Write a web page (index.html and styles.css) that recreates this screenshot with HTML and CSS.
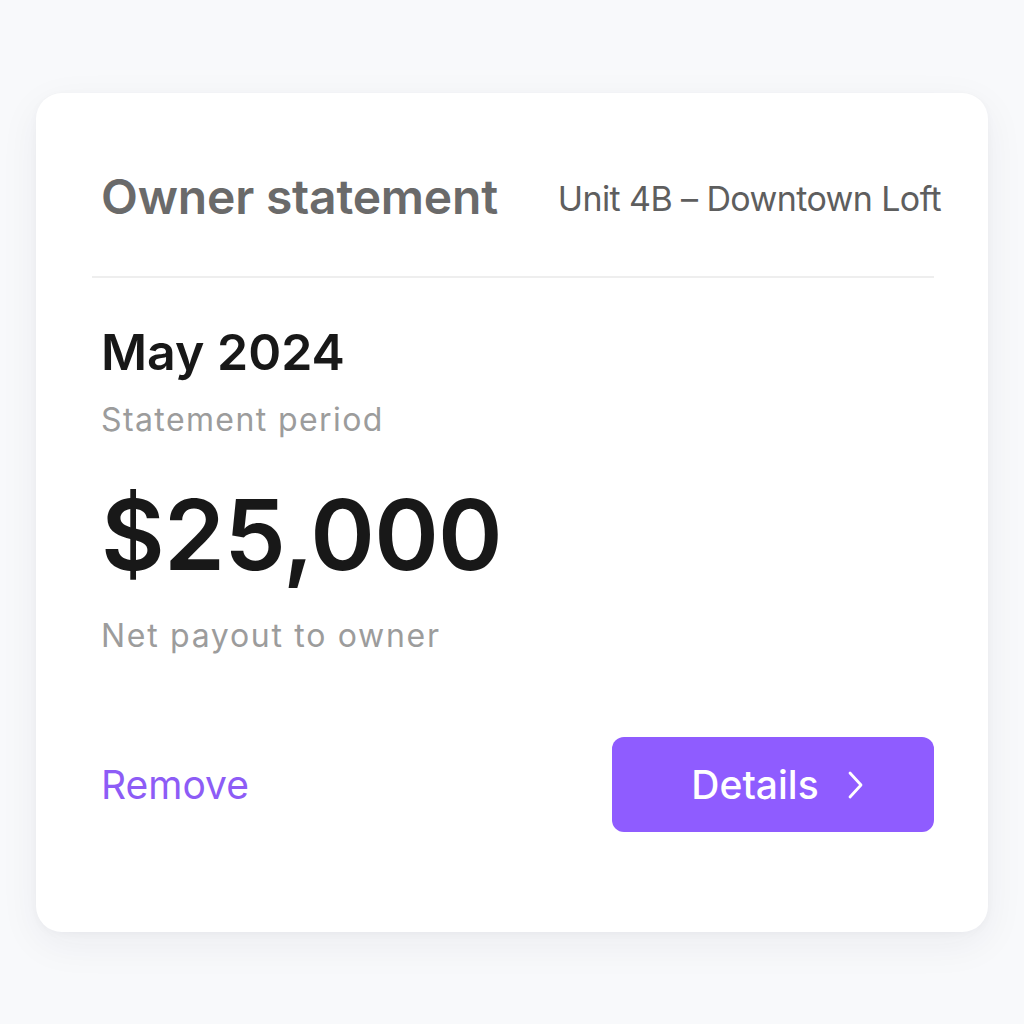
FILE: index.html
```html
<!DOCTYPE html>
<html>
<head>
<meta charset="utf-8">
<link rel="stylesheet" href="styles.css">
</head>
<body>
<div class="card">
  <div class="header">
    <h1 class="title">Owner statement</h1>
    <div class="unit">Unit 4B – Downtown Loft</div>
  </div>
  <div class="divider"></div>
  <div class="body">
    <div class="period">May 2024</div>
    <div class="label">Statement period</div>
    <div class="amount">$25,000</div>
    <div class="label label-net">Net payout to owner</div>
  </div>
  <div class="actions">
    <a class="remove">Remove</a>
    <button class="details">Details
      <svg class="chev" width="20" height="30" viewBox="0 0 20 30"><path d="M5 3 L16 15 L5 27" fill="none" stroke="#fff" stroke-width="2.8" stroke-linecap="round" stroke-linejoin="round"/></svg>
    </button>
  </div>
</div>
</body>
</html>
```
FILE: styles.css
```css
html, body { margin: 0; padding: 0; }
body {
  width: 1024px;
  height: 1024px;
  background: #f8f9fb;
  font-family: Inter, "Noto Sans", sans-serif;
  padding-top: 93px;
  padding-left: 36px;
  box-sizing: border-box;
}
.card {
  width: 952px;
  height: 839px;
  background: #fff;
  border-radius: 26px;
  box-shadow: 0 12px 40px rgba(30, 40, 70, 0.06), 0 2px 8px rgba(30,40,70,0.03);
  box-sizing: border-box;
  padding: 0 54px 0 56px;
  display: flex;
  flex-direction: column;
}
.header {
  display: flex;
  justify-content: space-between;
  align-items: baseline;
  padding: 76px 0 0 9px;
  margin-right: -7px;
}
.title {
  margin: 0;
  font-size: 48px;
  font-weight: 600;
  color: #6a6a6a;
  letter-spacing: -0.2px;
  line-height: 56px;
}
.unit {
  font-size: 34px;
  color: #5e5e5e;
  font-weight: 400;
  letter-spacing: -0.6px;
  line-height: 56px;
  position: relative;
  top: -3px;
}
.divider {
  height: 2px;
  background: #eeeeee;
  margin-top: 46px;
}
.body {
  padding-left: 9px;
  padding-top: 44px;
}
.period {
  font-size: 50px;
  font-weight: 600;
  color: #181818;
  line-height: 60px;
}
.label {
  font-size: 32px;
  color: #9c9c9c;
  line-height: 40px;
  margin-top: 18px;
  letter-spacing: 1.4px;
}
.amount {
  font-size: 98px;
  font-weight: 600;
  color: #181818;
  line-height: 110px;
  margin-top: 40px;
  letter-spacing: -0.8px;
}
.label-net { margin-top: 26px; letter-spacing: 1.7px; }
.actions {
  display: flex;
  justify-content: space-between;
  align-items: center;
  margin-top: 81px;
  padding-left: 9px;
}
.remove {
  font-size: 39px;
  color: #8d5cf6;
}
.details {
  width: 322px;
  height: 95px;
  border: none;
  border-radius: 12px;
  background: #8f5cff;
  color: #fff;
  font-family: Inter, "Noto Sans", sans-serif;
  font-size: 39px;
  font-weight: 500;
  display: flex;
  align-items: center;
  justify-content: center;
  gap: 26px;
  padding: 0 0 0 10px;
}
.chev { display: block; }
```
